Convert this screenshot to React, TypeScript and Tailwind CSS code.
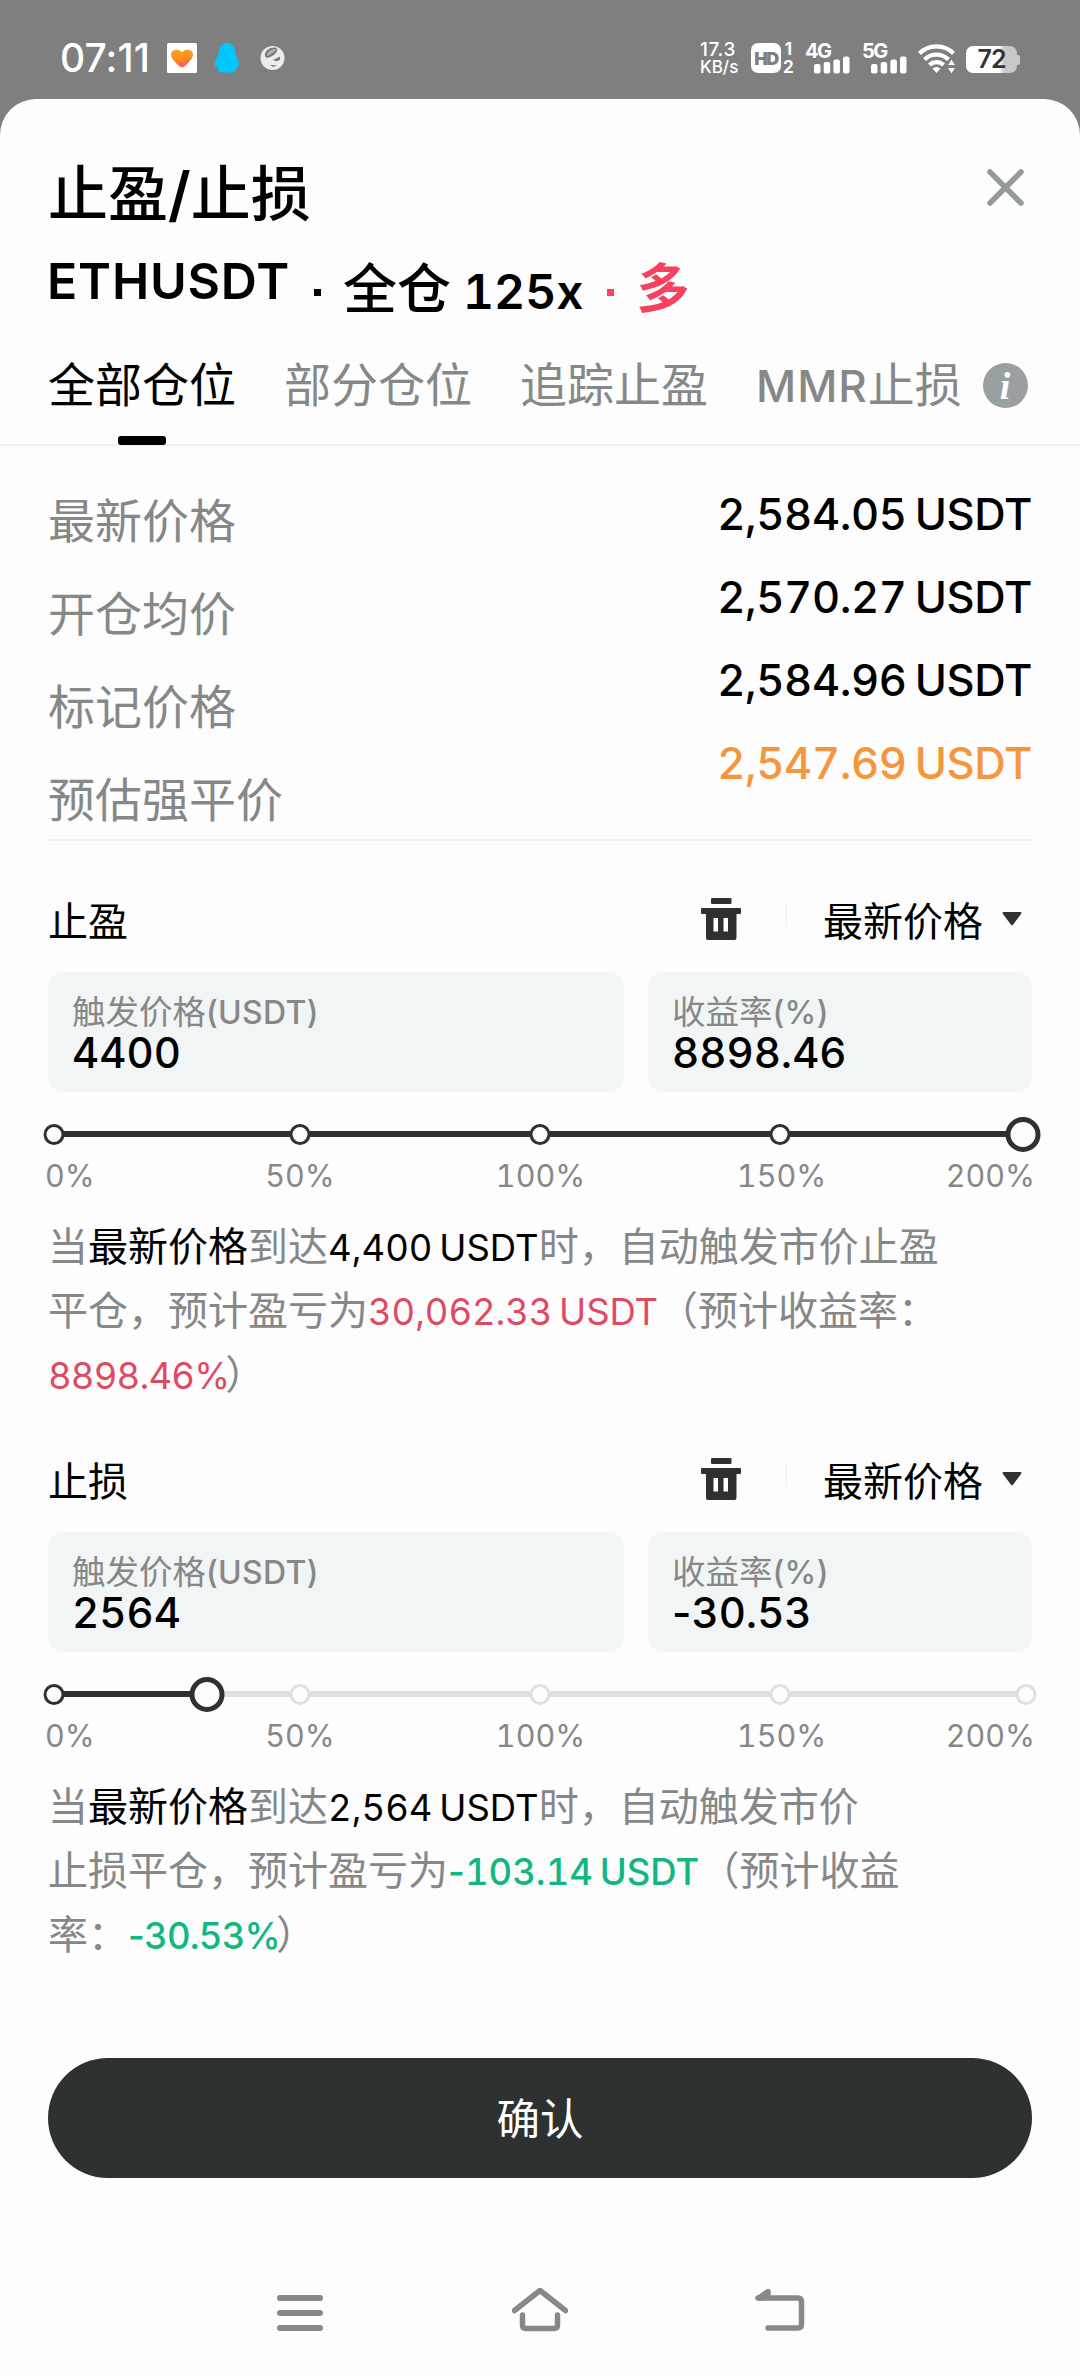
import type { ReactNode } from 'react';

const prices = ['2,584.05 USDT', '2,570.27 USDT', '2,584.96 USDT', '2,547.69 USDT'];
const priceLabels = ['最新价格', '开仓均价', '标记价格', '预估强平价'];
const tabs = ['全部仓位', '部分仓位', '追踪止盈'];

// centre of every stop, measured from the left edge of the slider
const stops = [6, 252, 492, 732, 978];

function SignalBars() {
  return (
    <svg width="36" height="18" viewBox="0 0 36 18" fill="#fff">
      <rect x="0" y="8" width="6.5" height="9.5" rx="2" />
      <rect x="9.7" y="6" width="6.5" height="11.5" rx="2" />
      <rect x="19.4" y="3.5" width="6.5" height="14" rx="2" />
      <rect x="29" y="0.5" width="6.5" height="17" rx="2" />
    </svg>
  );
}

function Signal({ label }: { label: string }) {
  return (
    <div className="flex w-[57px] flex-col">
      <span className="h-[13px] text-[20px] leading-[16px] font-bold tracking-[-1.5px]">{label}</span>
      <div className="ml-[9px] h-[18px]">
        <SignalBars />
      </div>
    </div>
  );
}

function StatusBar() {
  return (
    <div className="flex h-[99px] items-start text-white">
      <span className="ml-[60px] mt-[37px] w-[107px] text-[39px] leading-[42px] font-medium tracking-[0.1px]">07:11</span>
      <svg className="mt-[43px]" width="30" height="30" viewBox="0 0 30 30">
        <defs>
          <linearGradient id="heart" x1="0" y1="0" x2="0.2" y2="1">
            <stop offset="0" stopColor="#f7a81b" />
            <stop offset="0.5" stopColor="#fb9420" />
            <stop offset="1" stopColor="#fb5a50" />
          </linearGradient>
        </defs>
        <rect width="30" height="30" rx="1.5" fill="#fff" />
        <path d="M15 24.5 C13 24.5 4 16.5 4 11.8 C4 6.5 11.5 5 15 9.3 C18.5 5 26 6.5 26 11.8 C26 16.5 17 24.5 15 24.5Z" fill="url(#heart)" />
      </svg>
      <svg className="ml-[16px] mt-[42px]" width="28" height="32" viewBox="0 0 28 32">
        <path d="M14 1 C19 1 21.5 5 22 9 L23 14 C25.5 18 26.5 21 26 24 C25 25.2 24 24.5 23 25 C23.5 29 22 30.5 19 30.5 L9 30.5 C6 30.5 4.5 29 5 25 C4 24.5 3 25.2 2 24 C1.5 21 2.5 18 5 14 L6 9 C6.5 5 9 1 14 1Z" fill="#00c8ff" />
      </svg>
      <svg className="ml-[19px] mt-[45px]" width="25" height="26" viewBox="0 0 25 26">
        <circle cx="12.5" cy="13" r="12" fill="#ececec" />
        <path d="M5 11 C4 7 9 2 15 2.5 C19 3 17 8 13 10.5 C10 12.5 6 14 5 11Z" fill="#777" />
        <path d="M7 9 C9 5 13 3.5 16 4 C15 7 11 9.5 7 11Z" fill="#b0b0b0" />
        <path d="M13 15 L20 11.5 L20 14.5 C18 16.5 15 16.5 13 15Z" fill="#777" />
        <path d="M10 20 L17 20.5 L13 22Z" fill="#777" />
      </svg>

      <div className="ml-[415px] mt-[42px] flex w-[51px] flex-col font-medium">
        <span className="h-[16px] text-[19px] leading-[16px] tracking-[0.6px]">17.3</span>
        <span className="h-[17px] text-[17px] leading-[19px]">KB/s</span>
      </div>
      <div className="mt-[43px] flex h-[30px] w-[30px] items-center justify-center rounded-[7px] bg-white text-[18px] font-black tracking-[-1.5px] text-[#7f7f7f]">
        HD
      </div>
      <div className="mt-[42px] ml-[2px] flex w-[22px] flex-col text-[17px] font-bold">
        <span className="h-[17px] w-[11px] text-center leading-[15px]">1</span>
        <span className="h-[16px] w-[11px] leading-[16px]">2</span>
      </div>
      <div className="mt-[43px] flex">
        <Signal label="4G" />
        <Signal label="5G" />
      </div>
      <svg className="-ml-[2px] mt-[43px]" width="40" height="31" viewBox="0 0 40 31" fill="none" stroke="#fff" strokeWidth="4.2">
        <path d="M2.5 10.5 A24 24 0 0 1 36.5 10.5" />
        <path d="M7.5 16.5 A17 17 0 0 1 31.5 16.5" />
        <path d="M12.5 22 A10 10 0 0 1 26.5 22" />
        <path d="M19.5 30 L15.5 25.6 A6 6 0 0 1 23.5 25.6Z" fill="#fff" stroke="none" />
        <path d="M34.5 16 L38.8 22.5 H30.2Z M34.5 31 L30.2 24.5 H38.8Z" fill="#fff" stroke="#7f7f7f" strokeWidth="1" />
      </svg>
      <div className="ml-[9px] mt-[46px] flex items-center">
        <div className="flex h-[27px] w-[51px] items-center justify-center rounded-[7px] bg-linear-to-r from-white from-65% to-[#c8c8c8] to-75% text-[25px] leading-none font-semibold tracking-[-1px] text-[#333]">
          72
        </div>
        <div className="h-[10px] w-[3px] rounded-r-[2px] bg-[#c8c8c8]" />
      </div>
    </div>
  );
}

function Trash() {
  return (
    <svg width="40" height="42" viewBox="0 0 40 42" fill="#2f3131">
      <rect x="10" y="0" width="20.5" height="6" rx="1" />
      <path fillRule="evenodd" d="M1 10 H39 a1 1 0 0 1 1 1 V15 a1 1 0 0 1 -1 1 H35.5 V40 a2 2 0 0 1 -2 2 H7 a2 2 0 0 1 -2 -2 V16 H1 a1 1 0 0 1 -1 -1 V11 a1 1 0 0 1 1 -1Z M12.5 20 V33.5 H17 V20Z M22.5 20 V33.5 H27 V20Z" />
    </svg>
  );
}

// the tabular minus is as wide as a digit, so it stays proportional
function Signed({ text }: { text: string }) {
  if (!text.startsWith('-')) return <>{text}</>;
  return (
    <>
      <span className="normal-nums">-</span>
      {text.slice(1)}
    </>
  );
}

function Field({ label, unit, value, className }: { label: string; unit: string; value: string; className: string }) {
  return (
    <div className={`${className} flex h-[120px] flex-col rounded-2xl bg-[#f1f5f5] pl-[24px] pt-[20px]`}>
      <span className="h-[40px] whitespace-nowrap text-[33.5px] leading-[40px] text-[#868888]">
        {label}
        <span className="text-[32px] font-medium tracking-[0.3px]">{unit}</span>
      </span>
      <span className="text-[42px] leading-[42px] font-medium tabular-nums">
        <Signed text={value} />
      </span>
    </div>
  );
}

function Slider({ value }: { value: number }) {
  return (
    <>
      <div className="relative mt-[24px] h-[36px]">
        <div className="absolute left-[6px] top-[15px] h-[6px] w-[972px] bg-[#dfe0e0]" />
        <div className="absolute left-[6px] top-[15px] h-[6px] bg-[#303232]" style={{ width: value - 6 }} />
        {stops.map((x) => (
          <div
            key={x}
            className={`absolute top-[7.5px] h-[21px] w-[21px] -translate-x-1/2 rounded-full border-3 bg-[#fdfdfe] ${x <= value ? 'border-[#303232]' : 'border-[#dfe0e0]'} ${value > 970 && x > 970 ? 'hidden' : ''}`}
            style={{ left: x }}
          />
        ))}
        <div
          className="absolute top-[0.5px] h-[35px] w-[35px] -translate-x-1/2 rounded-full border-5 border-[#303232] bg-[#fdfdfe]"
          style={{ left: value }}
        />
      </div>
      <div className="-mx-[3px] mt-[8px] flex h-[30px] text-[30.5px] leading-[31px] tabular-nums text-[#868888]">
        <span className="w-[135px]">0%</span>
        <span className="w-[240px] text-center">50%</span>
        <span className="w-[241px] text-center">100%</span>
        <span className="w-[241px] text-center">150%</span>
        <span className="flex-1 text-right">200%</span>
      </div>
    </>
  );
}

type OrderProps = { title: string; price: string; rate: string; value: number; children: ReactNode };

function Order({ title, price, rate, value, children }: OrderProps) {
  return (
    <section className="px-[48px] pb-[33px]">
      <div className="flex h-[92px] items-start">
        <span className="mt-[12px] flex-1 text-[40px] leading-[60px]">{title}</span>
        <div className="mt-[18px]">
          <Trash />
        </div>
        <div className="ml-[44px] mt-[24px] h-[22px] w-[2px] bg-[#f5f6f6]" />
        <span className="ml-[36px] mt-[12px] text-[40px] leading-[60px]">最新价格</span>
        <svg className="ml-[19px] mr-[10px] mt-[32px]" width="20" height="14" viewBox="0 0 20 14">
          <path d="M1.5 0 H18.5 Q20 0.5 19.2 1.8 L11 12.8 Q10 13.8 9 12.8 L0.8 1.8 Q0 0.5 1.5 0Z" fill="#303232" />
        </svg>
      </div>
      <div className="flex gap-[24px]">
        <Field label="触发价格" unit="(USDT)" value={price} className="w-[576px]" />
        <Field label="收益率" unit="(%)" value={rate} className="w-[384px]" />
      </div>
      <Slider value={value} />
      <div className="mt-[25px] whitespace-nowrap text-[40px] leading-[64px] text-[#868888]">{children}</div>
    </section>
  );
}

const Num = ({ children, className }: { children: string; className: string }) => (
  <span className={`text-[36.5px] leading-none tabular-nums [word-spacing:-3px] ${className}`}>
    <Signed text={children} />
  </span>
);

export default function App() {
  return (
    <div className="flex h-[2376px] w-[1080px] flex-col overflow-hidden bg-[#7f7f7f] font-[Inter,'Noto_Sans_CJK_SC',sans-serif] text-black">
      <StatusBar />
      <main className="flex flex-1 flex-col rounded-t-[36px] bg-[#fdfdfe]">
        <header className="flex h-[145px] items-start justify-between pl-[48px] pr-[56px]">
          <h1 className="mt-[55px] text-[60px] leading-[80px] font-medium">
            止盈<span className="font-semibold">/</span>止损
          </h1>
          <svg className="mt-[70px]" width="37" height="37" viewBox="0 0 37 37" stroke="#94999b" strokeWidth="5.5" strokeLinecap="round">
            <path d="M3 3 L34 34 M34 3 L3 34" />
          </svg>
        </header>

        <div className="flex h-[82px] items-start whitespace-nowrap pl-[47px] font-semibold">
          <span className="mt-[7px] text-[50px] leading-[60px] tracking-[0.8px]">ETHUSDT</span>
          <span className="ml-[24px] mt-[45px] h-[7px] w-[7px] bg-black" />
          <span className="ml-[22px] mt-[6px] text-[54px] leading-[80px] font-medium">
            全仓<span className="ml-[12px] text-[48px] font-semibold tabular-nums">125x</span>
          </span>
          <span className="ml-[23px] mt-[45px] h-[7px] w-[7px] bg-[#f6425f]" />
          <span className="ml-[23px] mt-[5px] text-[53px] leading-[80px] font-bold text-[#f6425f]">多</span>
        </div>

        <nav className="flex h-[120px] items-start gap-[48px] whitespace-nowrap border-b-2 border-[#f1f1f2] pl-[48px] text-[47px] leading-[70px] text-[#868888]">
          {tabs.map((tab, i) => (
            <div key={tab} className={`mt-[24px] flex flex-col items-center ${i === 0 ? 'text-black' : ''}`}>
              {tab}
              {i === 0 && <div className="mt-[16px] h-[9px] w-[48px] rounded-[3px] bg-black" />}
            </div>
          ))}
          <div className="mt-[24px] flex items-center">
            <span>
              <span className="text-[44px] font-medium tracking-[1px]">MMR</span>止损
            </span>
            <svg className="ml-[21px]" width="45" height="45" viewBox="0 0 45 45">
              <circle cx="22.5" cy="22.5" r="22.5" fill="#9a9fa2" />
              <text x="22" y="35.5" textAnchor="middle" fontSize="38" fontStyle="italic" fontWeight="700" fontFamily="Liberation Serif, serif" fill="#fff">
                i
              </text>
            </svg>
          </div>
        </nav>

        <div className="mx-[48px] flex h-[395px] justify-between border-b-2 border-[#f1f1f2]">
          <div className="mt-[28px] flex flex-col text-[47px] leading-[93px] text-[#868888]">
            {priceLabels.map((label) => (
              <span key={label}>{label}</span>
            ))}
          </div>
          <div className="mt-[27px] flex flex-col text-right text-[43.5px] leading-[83px] font-medium tabular-nums tracking-[-0.4px] [word-spacing:-3px]">
            {prices.map((price, i) => (
              <span key={price} className={i === 3 ? 'text-[#f5953c]' : ''}>
                {price}
              </span>
            ))}
          </div>
        </div>

        <div className="h-[39px]" />

        <Order title="止盈" price="4400" rate="8898.46" value={975}>
          <p>
            当<span className="text-black">最新价格</span>到达<Num className="text-black">4,400 USDT</Num>时，自动触发市价止盈
          </p>
          <p>
            平仓，预计盈亏为<Num className="tracking-[-0.1px] text-[#df4a63]">30,062.33 USDT</Num>（预计收益率：
          </p>
          <p>
            <Num className="tracking-[-0.8px] text-[#df4a63]">8898.46%</Num>
            <span className="-ml-[4px]">）</span>
          </p>
        </Order>

        <Order title="止损" price="2564" rate="-30.53" value={158.5}>
          <p>
            当<span className="text-black">最新价格</span>到达<Num className="text-black">2,564 USDT</Num>时，自动触发市价
          </p>
          <p>
            止损平仓，预计盈亏为<Num className="font-medium text-[#12b780]">-103.14 USDT</Num>（预计收益
          </p>
          <p>
            率：<Num className="font-medium tracking-[-0.8px] text-[#12b780]">-30.53%</Num>
            <span className="-ml-[4px]">）</span>
          </p>
        </Order>

        <button className="mx-[48px] mt-[58px] flex h-[120px] shrink-0 items-center justify-center rounded-full bg-[#2e3132] pt-[3px] text-[43.5px] text-white">
          确认
        </button>

        <div className="mt-[106px] flex justify-center gap-[184px]">
          <svg width="56" height="56" viewBox="0 0 56 56" stroke="#888" strokeWidth="6" strokeLinecap="round">
            <path d="M8 14 H48 M8 29 H48 M8 44 H48" />
          </svg>
          <svg width="56" height="56" viewBox="0 0 56 56" fill="none" stroke="#888" strokeWidth="5.5" strokeLinecap="round" strokeLinejoin="round">
            <path d="M2.5 26.5 L28 6.5 L53.5 26.5" />
            <path d="M10.5 31 V41 Q10.5 44.5 14 44.5 H42 Q45.5 44.5 45.5 41 V31" />
          </svg>
          <svg width="56" height="56" viewBox="0 0 56 56" fill="none" stroke="#888" strokeWidth="5.5" strokeLinecap="round" strokeLinejoin="round">
            <path d="M6 14 H46 Q49.5 14 49.5 18 V40 Q49.5 44 46 44 H16" />
            <path d="M16 7.5 L7 14 L16 13Z" />
          </svg>
        </div>
      </main>
    </div>
  );
}
